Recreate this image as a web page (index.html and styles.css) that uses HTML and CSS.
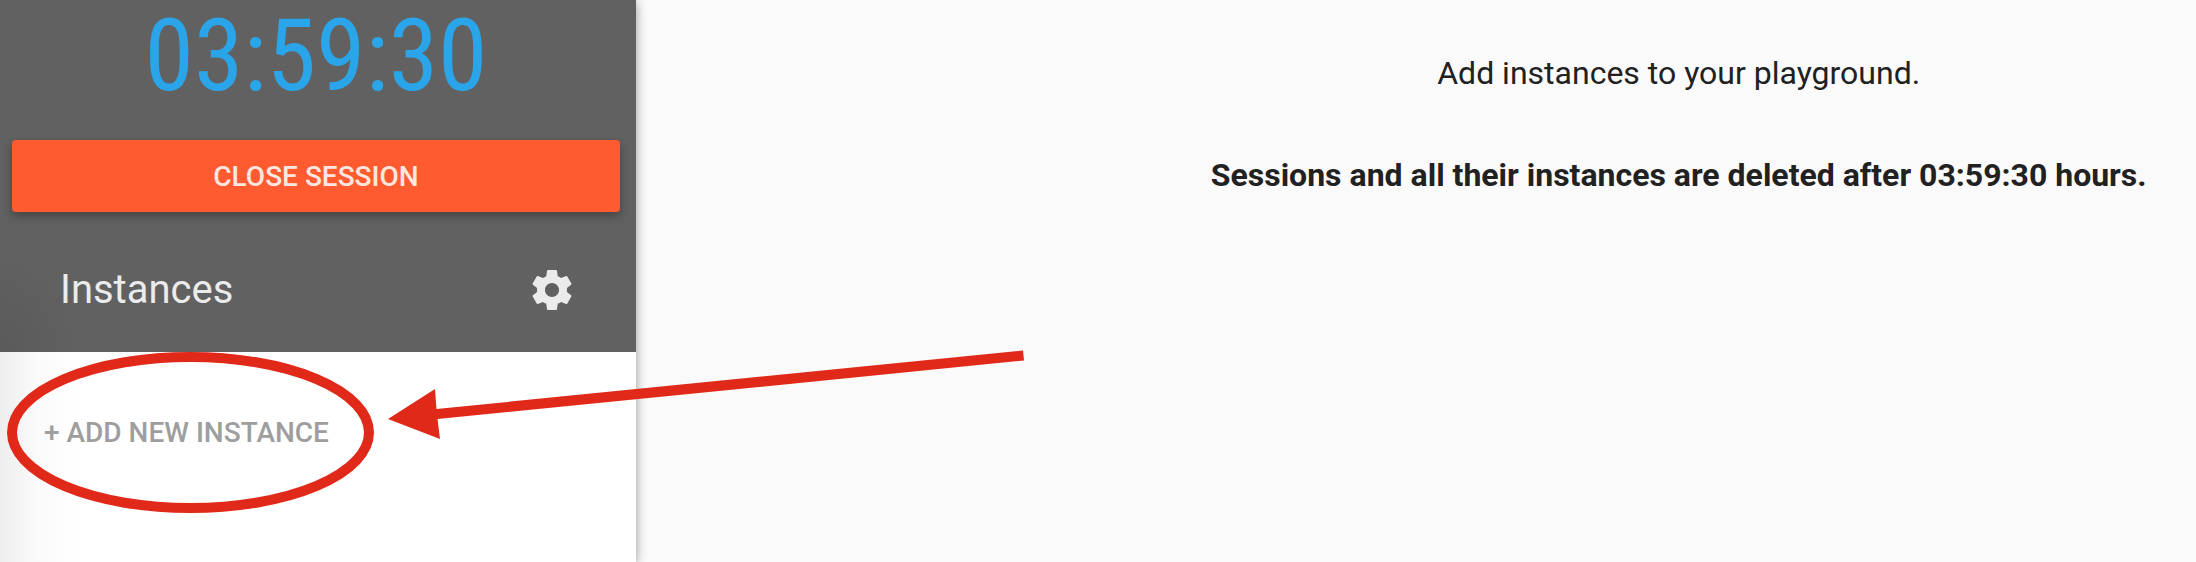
FILE: index.html
```html
<!DOCTYPE html>
<html lang="en">
<head>
<meta charset="utf-8">
<title>Playground</title>
<link rel="stylesheet" href="styles.css">
</head>
<body>
<div class="app">
  <aside class="sidebar">
    <header class="session">
      <div class="timer" role="timer">03:59:30</div>
      <button class="close-button" type="button">CLOSE SESSION</button>
      <div class="toolbar">
        <h1 class="toolbar-title">Instances</h1>
        <button class="icon-button" type="button" aria-label="Settings">
          <svg class="icon" viewBox="0 0 24 24" aria-hidden="true"><path d="M19.43 12.98c.04-.32.07-.64.07-.98s-.03-.66-.07-.98l2.11-1.65c.19-.15.24-.42.12-.64l-2-3.46c-.12-.22-.39-.3-.61-.22l-2.49 1c-.52-.4-1.08-.73-1.69-.98l-.38-2.65C14.46 2.18 14.25 2 14 2h-4c-.25 0-.46.18-.49.42l-.38 2.65c-.61.25-1.17.59-1.69.98l-2.49-1c-.23-.09-.49 0-.61.22l-2 3.46c-.13.22-.07.49.12.64l2.11 1.65c-.04.32-.07.65-.07.98s.03.66.07.98l-2.11 1.65c-.19.15-.24.42-.12.64l2 3.46c.12.22.39.3.61.22l2.49-1c.52.4 1.08.73 1.69.98l.38 2.65c.03.24.24.42.49.42h4c.25 0 .46-.18.49-.42l.38-2.65c.61-.25 1.17-.59 1.69-.98l2.49 1c.23.09.49 0 .61-.22l2-3.46c.12-.22.07-.49-.12-.64l-2.11-1.65zM12 15.5c-1.93 0-3.5-1.57-3.5-3.5s1.57-3.5 3.5-3.5 3.5 1.57 3.5 3.5-1.57 3.5-3.5 3.5z"/></svg>
        </button>
      </div>
    </header>
    <div class="instances">
      <button class="add-button" type="button">+ ADD NEW INSTANCE</button>
    </div>
  </aside>
  <main class="content">
    <div class="message">
      <p class="line">Add instances to your playground.</p>
      <p class="line strong">Sessions and all their instances are deleted after 03:59:30 hours.</p>
    </div>
  </main>
  <svg class="annotation" width="1040" height="180" viewBox="0 340 1040 180" aria-hidden="true">
    <ellipse cx="190.500" cy="432.500" rx="178.500" ry="75.500"/>
    <path d="M388 419L435 389L436.500 409L1023 350.500L1024 360.500L437.500 419L440 439Z"/>
  </svg>
</div>
</body>
</html>
```
FILE: styles.css
```css
* {
  box-sizing: border-box;
}

body {
  margin: 0;
  font-family: Roboto, "Liberation Sans", sans-serif;
  color: #212121;
  background: #fafafa;
}

.app {
  position: relative;
  display: flex;
  min-height: 100vh;
}

.sidebar {
  display: flex;
  flex-direction: column;
  flex: 0 0 636px;
  background: #fff;
  box-shadow: 0 2px 10px rgba(0, 0, 0, 0.4);
}

.session {
  display: flex;
  flex-direction: column;
  padding: 0 16px 0 12px;
  background: radial-gradient(ellipse 80px 100px at 0 100%, #5a5a5a, #616161);
}

.timer {
  font-family: "Liberation Sans Narrow", "Roboto Condensed", Roboto, sans-serif;
  font-size: 100px;
  line-height: 120px;
  padding-bottom: 20px;
  margin-top: -4px;
  text-align: center;
  color: #2ba5e9;
}

button {
  padding: 0;
  border: 0;
  background: none;
  font: inherit;
  cursor: pointer;
}

.close-button {
  margin-top: 4px;
  padding-top: 2px;
  border-radius: 4px;
  background: #ff5a30;
  box-shadow: 0 4px 10px rgba(0, 0, 0, 0.3);
  font-size: 28px;
  font-weight: 500;
  line-height: 70px;
  color: #ffe7e0;
}

.toolbar {
  display: flex;
  align-items: center;
  justify-content: space-between;
  height: 140px;
  padding: 16px 44px 0 48px;
  color: #ebebeb;
}

.toolbar-title {
  margin: 0;
  font-size: 40px;
  font-weight: 400;
  line-height: 48px;
}

.icon-button {
  color: inherit;
}

.icon {
  display: block;
  width: 48px;
  height: 48px;
  fill: currentColor;
}

.instances {
  flex: 1;
  padding: 44px;
  background: linear-gradient(90deg, #eee, #fafafa 36px, #fff 80px);
}

.add-button {
  padding-top: 2px;
  font-size: 28px;
  font-weight: 500;
  line-height: 70px;
  color: #9e9e9e;
}

.content {
  display: grid;
  flex: 1;
  grid-template-columns: 1fr 2fr;
  column-gap: 8px;
}

.message {
  grid-column: 2;
  padding-top: 53px;
  text-align: center;
}

.line {
  margin: 0 0 62px;
  font-size: 32px;
  line-height: 40px;
}

.strong {
  font-weight: 700;
}

.annotation {
  position: absolute;
  top: 340px;
  left: 0;
  pointer-events: none;
}

.annotation ellipse {
  fill: none;
  stroke: #e12919;
  stroke-width: 10;
}

.annotation path {
  fill: #e12919;
}
```
